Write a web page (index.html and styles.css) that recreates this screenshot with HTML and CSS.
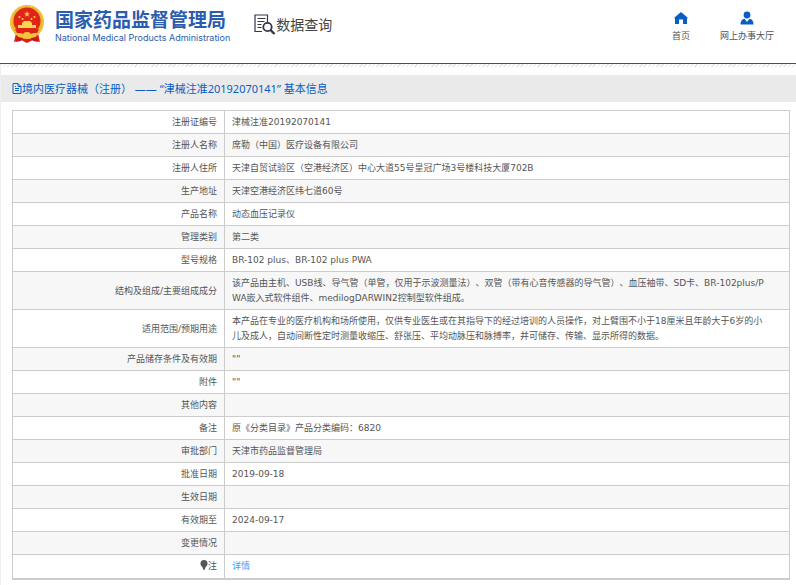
FILE: index.html
```html
<!DOCTYPE html>
<html lang="zh-CN">
<head>
<meta charset="utf-8">
<title>国家药品监督管理局 数据查询</title>
<link rel="stylesheet" href="styles.css">
</head>
<body>
<header class="header">
  <a class="brand" href="#">
    <svg class="emblem" viewBox="0 0 36 40" aria-hidden="true">
      <path d="M7 29 L5 38 L12 36 L18 39 L24 36 L31 38 L29 29Z" fill="#d8201c"/>
      <circle cx="18" cy="18" r="17" fill="#e9b52c"/>
      <circle cx="18" cy="18" r="16" fill="none" stroke="#f7d755" stroke-width="1" stroke-dasharray="2 1"/>
      <circle cx="18" cy="17" r="13.500" fill="#e2231a"/>
      <path d="M18 7l.8 2.200h2.200l-1.800 1.400.7 2.200-1.900-1.300-1.900 1.300.7-2.200-1.800-1.400h2.200z" fill="#fbd84b"/>
      <g fill="#fbd84b"><circle cx="10.500" cy="13" r="1"/><circle cx="13.500" cy="15" r="1"/><circle cx="22.500" cy="15" r="1"/><circle cx="25.500" cy="13" r="1"/>
      <path d="M13 19l2-2h6l2 2v2h4v3H9v-3h4z"/></g>
      <path d="M6 25q12 4 24 0l-2 4H8z" fill="#d8201c"/>
      <path d="M8 29q4 0 6 2a4 3 0 0 1 8 0q2-2 6-2l-2 5-5-1-3 2-3-2-5 1z" fill="#f2c337"/>
      <path d="M9 33l5 1-2 3-5 1zM27 33l-5 1 2 3 5 1z" fill="#c81717"/>
    </svg>
    <span class="brand-text">
      <span class="brand-cn">国家药品监督管理局</span>
      <span class="brand-en">National Medical Products Administration</span>
    </span>
  </a>
  <div class="section">
    <svg class="section-icon" viewBox="0 0 22 21" aria-hidden="true">
      <g fill="none" stroke="#34344a">
        <path d="M8 17.500H1V1h12.500v7" stroke-width="1.200"/>
        <path d="M3.500 4.500h8M3.500 7.500h7M3.500 10.500h4M3.500 13.500h4" stroke-width="1"/>
        <circle cx="13.500" cy="13" r="4.200" stroke-width="1.800"/>
        <path d="M16.500 16l4 4" stroke-width="2.400"/>
      </g>
    </svg>
    <span>数据查询</span>
  </div>
  <nav class="nav">
    <a href="#">
      <svg class="nav-icon" viewBox="0 0 14 14" aria-hidden="true"><path d="M7 1L0.500 6.500V7.500H1V13H5V8.500H9V13H13V7.500H13.500V6.500Z" fill="#0a5dc2"/></svg>
      <span>首页</span>
    </a>
    <a href="#">
      <svg class="nav-icon" viewBox="0 0 14 14" aria-hidden="true"><circle cx="7" cy="4" r="3.400" fill="#0a5dc2"/><path d="M0.500 13.500Q0.500 8.500 4.500 7.800L7 11 9.500 7.800Q13.500 8.500 13.500 13.500Z" fill="#0a5dc2"/></svg>
      <span>网上办事大厅</span>
    </a>
  </nav>
</header>
<main class="panel">
  <h1 class="title">
    <svg class="title-icon" viewBox="0 0 10 11" aria-hidden="true"><path d="M1 .500h5l3 3v7H1zM6 .500v3h3M3 5.500h4M3 7.500h4M3 3.500h1" fill="none" stroke="#0a5dc2"/></svg>
    <span>境内医疗器械（注册） —— “津械注准20192070141” 基本信息</span>
  </h1>
  <table class="info">
    <tbody>
      <tr><th scope="row">注册证编号</th><td>津械注准20192070141</td></tr>
      <tr><th scope="row">注册人名称</th><td>席勒（中国）医疗设备有限公司</td></tr>
      <tr><th scope="row">注册人住所</th><td>天津自贸试验区（空港经济区）中心大道55号皇冠广场3号楼科技大厦702B</td></tr>
      <tr><th scope="row">生产地址</th><td>天津空港经济区纬七道60号</td></tr>
      <tr><th scope="row">产品名称</th><td>动态血压记录仪</td></tr>
      <tr><th scope="row">管理类别</th><td>第二类</td></tr>
      <tr><th scope="row">型号规格</th><td>BR-102 plus、BR-102 plus PWA</td></tr>
      <tr><th scope="row">结构及组成/主要组成成分</th><td>该产品由主机、USB线、导气管（单管，仅用于示波测量法）、双管（带有心音传感器的导气管）、血压袖带、SD卡、BR-102plus/P<wbr>WA嵌入式软件组件、medilogDARWIN2控制型软件组成。</td></tr>
      <tr><th scope="row">适用范围/预期用途</th><td>本产品在专业的医疗机构和场所使用，仅供专业医生或在其指导下的经过培训的人员操作，对上臂围不小于18厘米且年龄大于6岁的小儿及成人，自动间断性定时测量收缩压、舒张压、平均动脉压和脉搏率，并可储存、传输、显示所得的数据。</td></tr>
      <tr><th scope="row">产品储存条件及有效期</th><td>""</td></tr>
      <tr><th scope="row">附件</th><td>""</td></tr>
      <tr><th scope="row">其他内容</th><td></td></tr>
      <tr><th scope="row">备注</th><td>原《分类目录》产品分类编码：6820</td></tr>
      <tr><th scope="row">审批部门</th><td>天津市药品监督管理局</td></tr>
      <tr><th scope="row">批准日期</th><td>2019-09-18</td></tr>
      <tr><th scope="row">生效日期</th><td></td></tr>
      <tr><th scope="row">有效期至</th><td>2024-09-17</td></tr>
      <tr><th scope="row">变更情况</th><td></td></tr>
      <tr><th scope="row"><svg class="pin" viewBox="0 0 8 10" aria-hidden="true"><circle cx="4" cy="3.500" r="3.500" fill="#555"/><path d="M2 6h4L4.500 10h-1z" fill="#555"/></svg>注</th><td><a class="detail" href="#">详情</a></td></tr>
    </tbody>
  </table>
</main>
</body>
</html>
```
FILE: styles.css
```css
* {
  box-sizing: border-box;
}

body {
  margin: 0;
  min-height: 100vh;
  display: flex;
  flex-direction: column;
  background: #fff;
  color: #555;
  font-family: "DejaVu Sans", "Noto Sans CJK SC", sans-serif;
  font-size: 9px;
  line-height: 15px;
  text-spacing-trim: space-all;
}

a {
  color: inherit;
  text-decoration: none;
}

.header {
  display: flex;
  align-items: flex-start;
  height: 64px;
  padding: 4px 22px 0 9px;
  border-bottom: 1px solid #0a5dc2;
}

.brand {
  display: flex;
  gap: 10px;
  color: #2b5cad;
}

.emblem {
  width: 36px;
  height: 40px;
}

.brand-text {
  display: flex;
  flex-direction: column;
  padding-top: 4px;
}

.brand-cn {
  font-family: "Noto Sans CJK SC", sans-serif;
  font-size: 19px;
  font-weight: 700;
  line-height: 22px;
}

.brand-en {
  font-family: Inter, "Liberation Sans", sans-serif;
  font-size: 9px;
  line-height: 16px;
}

.section {
  display: flex;
  align-items: center;
  margin: 9px 0 0 24px;
  color: #444;
  font-family: "Noto Sans CJK SC", sans-serif;
  font-size: 14px;
  line-height: 22px;
}

.section-icon {
  width: 22px;
  height: 21px;
}

.nav {
  display: flex;
  gap: 30px;
  margin: 7px 0 0 auto;
}

.nav a {
  display: flex;
  flex-direction: column;
  align-items: center;
  gap: 4px;
}

.nav-icon {
  width: 14px;
  height: 14px;
}

.panel {
  flex: 1;
  padding-top: 11px;
  border-left: 1px solid #eee;
  background: repeating-linear-gradient(135deg, #e4e4e4 0 1px, #fff 1px 3px) 0 0 / 100% 3px no-repeat;
}

.title {
  display: flex;
  align-items: center;
  height: 27px;
  margin: 0;
  padding: 0 0 0 11px;
  background: #eaeaea;
  color: #0a5dc2;
  font-family: "Noto Sans", "Noto Sans CJK SC", sans-serif;
  font-size: 11px;
  font-weight: 400;
}

.title-icon {
  width: 10px;
  height: 11px;
}

.info {
  width: calc(100% - 17px);
  margin: 8px 6px 0 11px;
  border-collapse: collapse;
  border: 1px solid #ccc;
  border-bottom-width: 2px;
}

.info tr:nth-child(even) {
  background: #f7f7f7;
}

.info th,
.info td {
  height: 23px;
  padding: 4px 7px 3px;
  border: 1px solid #ccc;
  text-align: left;
  font-weight: 400;
}

.info td {
  padding-right: 22px;
}

.info tr:last-child > * {
  height: 24px;
  border-bottom-width: 2px;
}

.info th {
  width: 212px;
  text-align: right;
}

.pin {
  width: 8px;
  height: 10px;
  vertical-align: -1px;
}

.detail {
  color: #409eff;
}
```
